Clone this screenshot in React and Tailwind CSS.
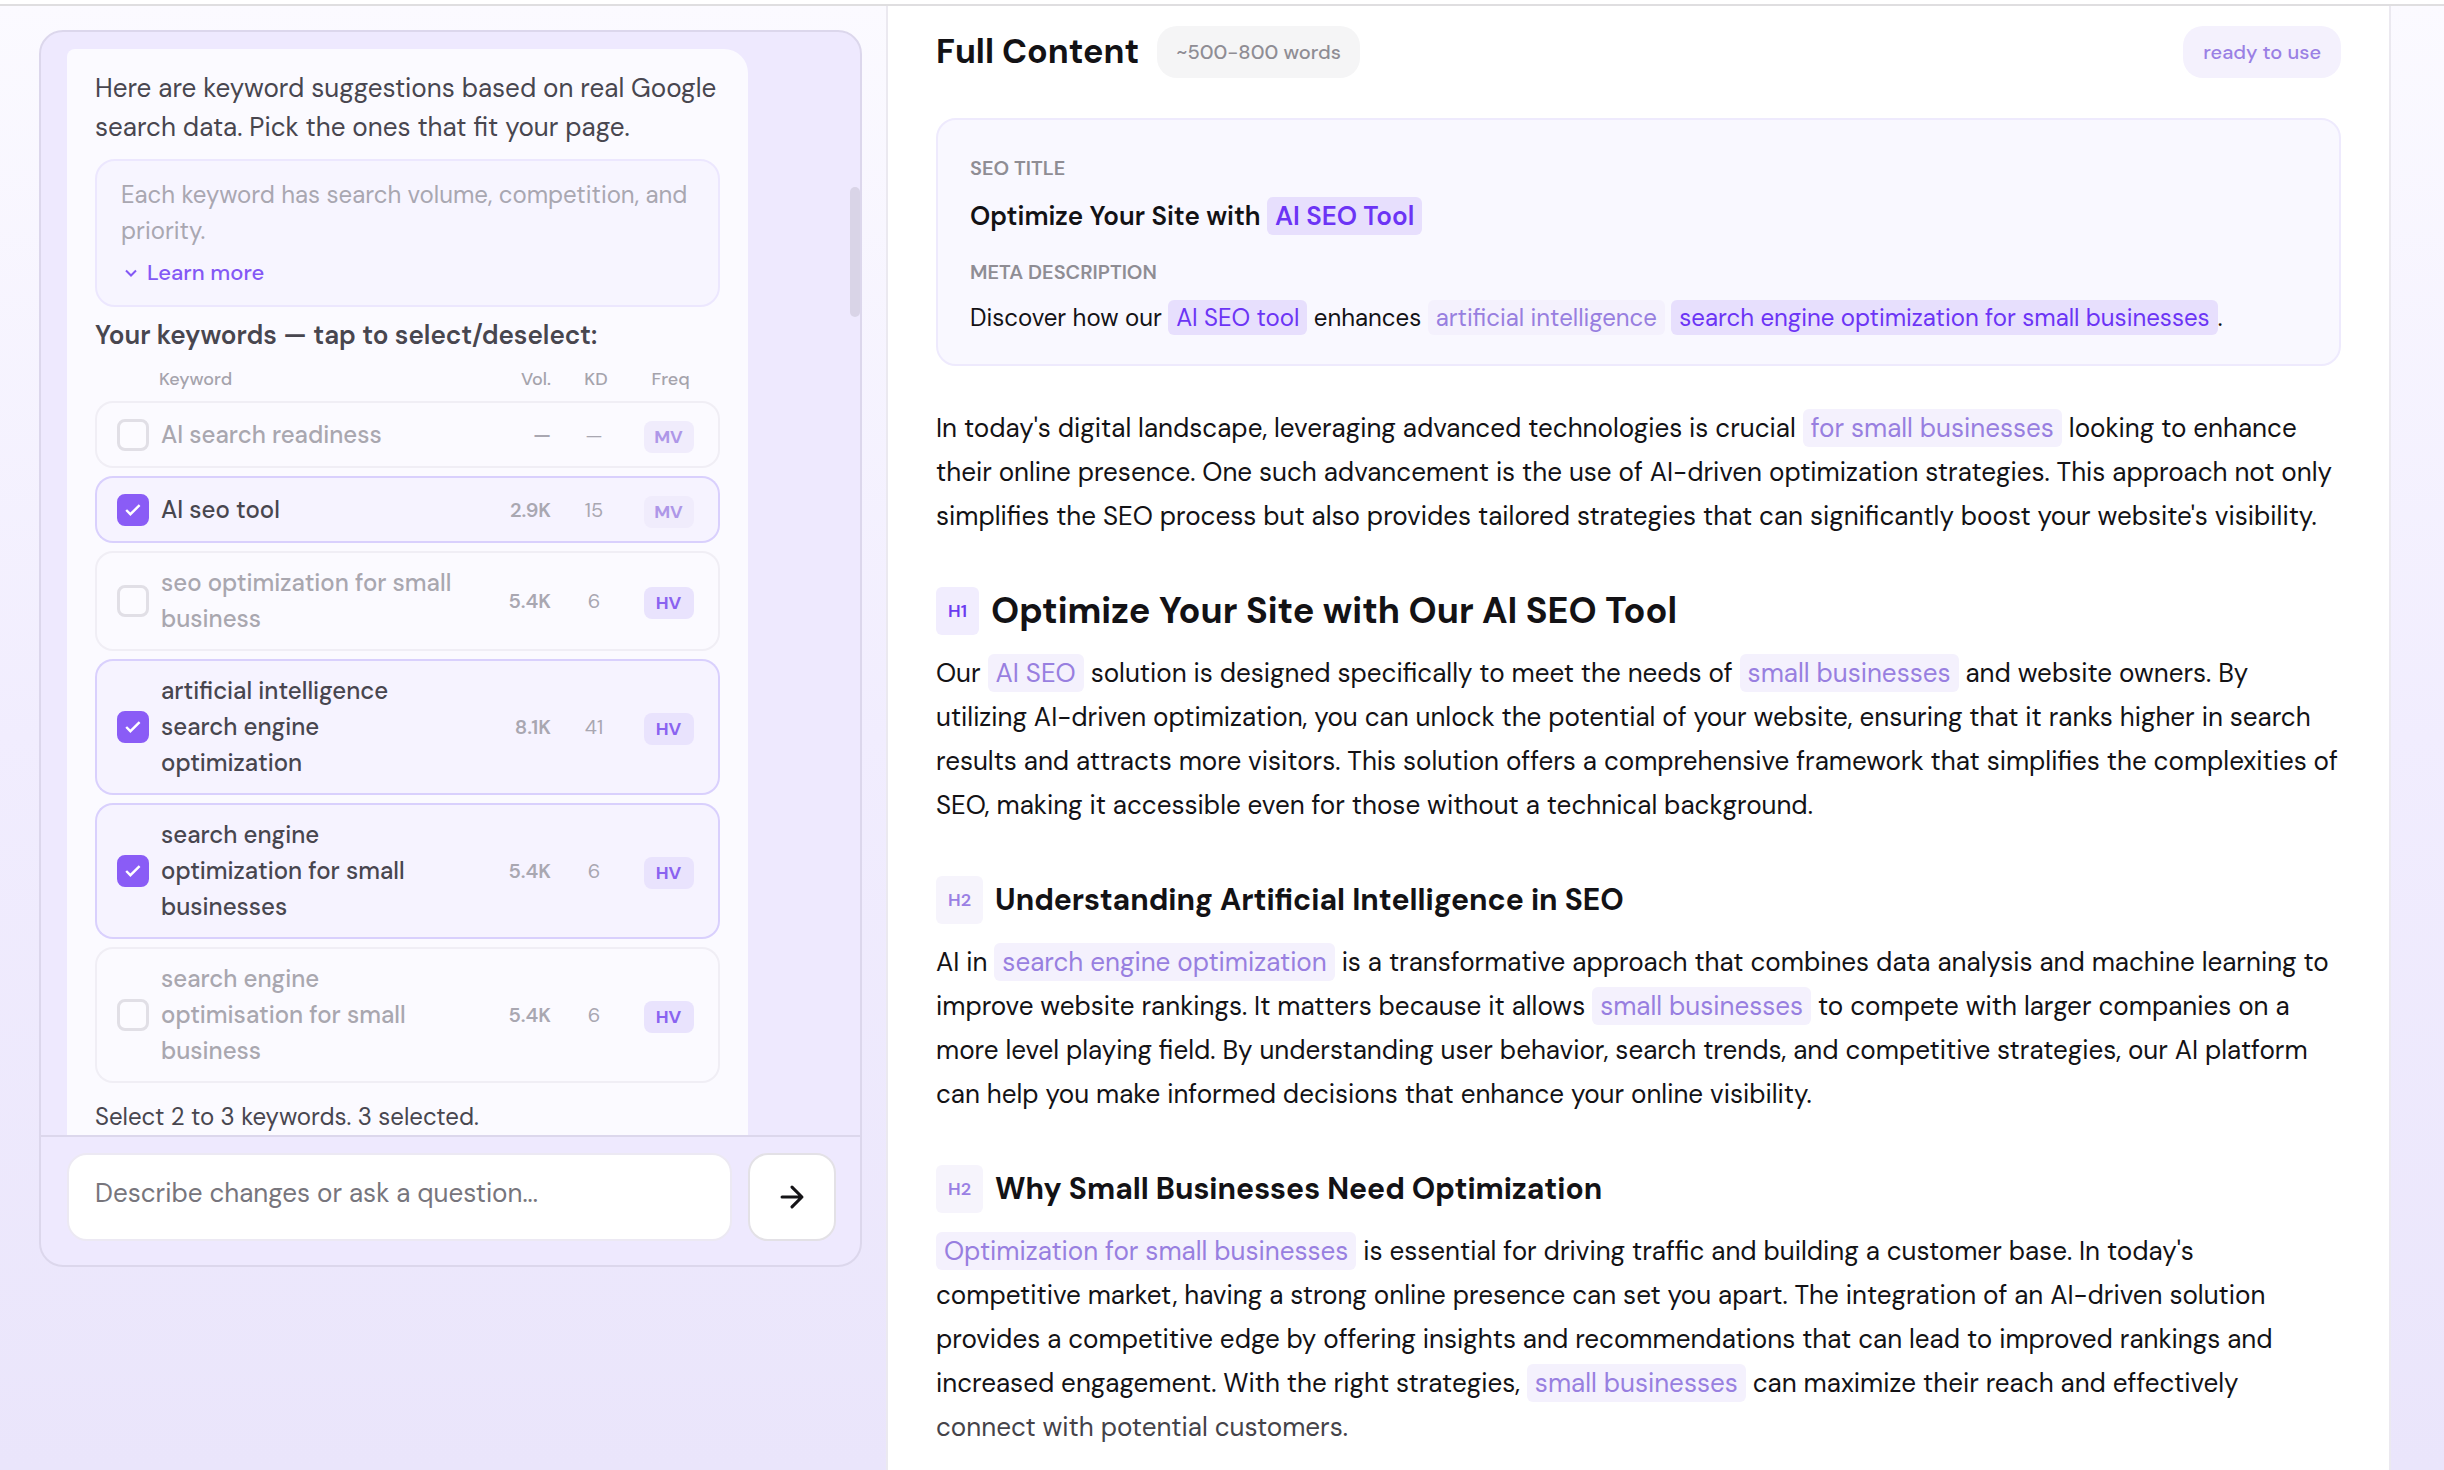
import { useState } from "react";

const KEYWORDS = [
  { id: "readiness", name: "AI search readiness", vol: "—", kd: "—", freq: "MV", on: false },
  { id: "tool", name: "AI seo tool", vol: "2.9K", kd: "15", freq: "MV", on: true },
  { id: "small", name: "seo optimization for small business", vol: "5.4K", kd: "6", freq: "HV", on: false },
  { id: "artificial", name: "artificial intelligence search engine optimization", vol: "8.1K", kd: "41", freq: "HV", on: true },
  { id: "engine", name: "search engine optimization for small businesses", vol: "5.4K", kd: "6", freq: "HV", on: true },
  { id: "optimisation", name: "search engine optimisation for small business", vol: "5.4K", kd: "6", freq: "HV", on: false },
];

function KeywordRow({ item, checked, onToggle }) {
  const cell = checked ? "border-[#d9d0fd] bg-[#f6f3ff]" : "border-[#f0eef5] bg-[#fbfaff]";
  return (
    <tr>
      <td className={`h-[67px] rounded-l-[18px] border-y-2 border-l-2 pl-5 ${cell}`}>
        <span className="grid size-8 place-items-center">
          <input
            id={item.id}
            type="checkbox"
            checked={checked}
            onChange={onToggle}
            className="col-start-1 row-start-1 size-8 appearance-none rounded-lg border-3 border-[#e1dfe6] bg-[#fcfbff] checked:border-[#8a5cf6] checked:bg-[#8a5cf6]"
          />
          {checked && (
            <svg viewBox="0 0 16 12" className="pointer-events-none col-start-1 row-start-1 h-3 w-4" fill="none" stroke="#fff" strokeWidth="2.4">
              <path d="M1.2 6 5.4 10.2 14.6 1.2" />
            </svg>
          )}
        </span>
      </td>
      <td className={`border-y-2 py-3 text-2xl leading-9 font-medium ${cell} ${checked ? "text-[#48464f]" : "text-[#a9a7af]"}`}>
        <label htmlFor={item.id} className="block">{item.name}</label>
      </td>
      <td className={`border-y-2 text-right text-xl font-semibold text-[#a9a7b1] ${cell}`}>{item.vol}</td>
      <td className={`border-y-2 text-center text-xl text-[#a9a7b1] ${cell}`}>{item.kd}</td>
      <td className={`rounded-r-[18px] border-y-2 border-r-2 pt-1 pr-[18px] text-center ${cell}`}>
        <span
          className={`inline-flex h-8 w-[50px] items-center justify-center rounded-lg text-lg font-bold ${
            item.freq === "HV" ? "bg-[#e9e3fd] text-[#8a63f0]" : "bg-[#f0ecfc] text-[#ae97e8]"
          }`}
        >
          {item.freq}
        </span>
      </td>
    </tr>
  );
}

function Strong({ children }) {
  return <mark className="rounded-md bg-[#e7dffd] px-2 py-0.5 text-[#6c34f5]">{children}</mark>;
}

function Soft({ children }) {
  return <mark className="rounded-md bg-[#f4f1fd] px-2 py-0.5 text-[#987fe0]">{children}</mark>;
}

function Section({ level, title, children }) {
  const first = level === 1;
  const Tag = first ? "h1" : "h2";
  return (
    <section className="mt-[49px]">
      <div className="flex items-center gap-3">
        <span
          className={`flex h-12 items-center rounded-md px-3 text-lg font-semibold ${
            first ? "bg-[#f1edfe] text-[#6c3bf0]" : "bg-[#f6f4fc] text-[#9a80e4]"
          }`}
        >
          H{level}
        </span>
        <Tag className={`font-bold ${first ? "text-4xl leading-12" : "text-3xl leading-12"}`}>{title}</Tag>
      </div>
      <p className="mt-4 text-[26px] leading-11">{children}</p>
    </section>
  );
}

export default function App() {
  const [selected, setSelected] = useState(() => KEYWORDS.filter((k) => k.on).map((k) => k.id));
  const toggle = (id) => setSelected((s) => (s.includes(id) ? s.filter((x) => x !== id) : [...s, id]));

  return (
    <div className="flex min-h-screen flex-col bg-white font-['DM_Sans',Inter,sans-serif] text-[#131215]">
      <header className="h-[6px] border-b-2 border-[#dfdee0] bg-white" />
      <main className="grid flex-1 grid-cols-[886fr_1505fr_53fr] bg-linear-to-b from-[#fbfaff] via-[#f1edfe] to-[#eae5fb]">
        <aside className="pt-6 pr-6 pl-[39px]">
          <div className="relative rounded-3xl border-2 border-[#dcd7ec] bg-[#eee9fe]">
            <div className="pt-[17px] pr-28 pl-[26px]">
              <div className="rounded-tl-lg rounded-tr-3xl bg-[#fbfaff] px-7 pt-5 text-[#48464f]">
                <p className="text-[26px] leading-[39px]">
                  Here are keyword suggestions based on real Google search data. Pick the ones that fit your page.
                </p>
                <div className="mt-3 rounded-[20px] border-2 border-[#ece7fe] bg-[#f7f5ff] px-6 py-4">
                  <p className="text-2xl leading-9 text-[#a9a7b1]">
                    Each keyword has search volume, competition, and priority.
                  </p>
                  <button type="button" className="mt-2 flex items-center gap-1.5 text-[22px] leading-8 font-medium text-[#8458f5]">
                    <svg viewBox="0 0 20 20" className="size-5" fill="none" stroke="currentColor" strokeWidth="2">
                      <path d="m5 7.5 5 5 5-5" />
                    </svg>
                    Learn more
                  </button>
                </div>
                <h3 className="mt-2 text-[26px] leading-10 font-semibold">Your keywords — tap to select/deselect:</h3>
                <table className="mt-0.5 w-full table-fixed border-separate border-spacing-x-0 border-spacing-y-2">
                  <colgroup>
                    <col className="w-[66px]" />
                    <col />
                    <col className="w-[90px]" />
                    <col className="w-[86px]" />
                    <col className="w-[83px]" />
                  </colgroup>
                  <thead>
                    <tr className="text-lg leading-7 text-[#a5a3ac]">
                      <th colSpan={2} className="pl-16 text-left font-medium">Keyword</th>
                      <th className="text-right font-medium">Vol.</th>
                      <th className="pl-1 text-center font-medium">KD</th>
                      <th className="pr-4 text-center font-medium">Freq</th>
                    </tr>
                  </thead>
                  <tbody>
                    {KEYWORDS.map((k) => (
                      <KeywordRow key={k.id} item={k} checked={selected.includes(k.id)} onToggle={() => toggle(k.id)} />
                    ))}
                  </tbody>
                </table>
                <p className="pt-2 text-2xl leading-9">Select 2 to 3 keywords. {selected.length} selected.</p>
              </div>
            </div>
            <form className="flex gap-4 border-t-2 border-[#dcd7ec] pt-4 pr-6 pb-6 pl-[26px]" onSubmit={(e) => e.preventDefault()}>
              <input
                type="text"
                aria-label="Describe changes or ask a question"
                placeholder="Describe changes or ask a question..."
                className="h-22 min-w-0 flex-1 rounded-[20px] border-2 border-[#ece9f3] bg-white px-[26px] pb-2 text-[26px] placeholder:text-[#77757c]"
              />
              <button type="submit" aria-label="Send" className="flex size-22 items-center justify-center rounded-[20px] border-2 border-[#e3e1e6] bg-white">
                <svg viewBox="0 0 24 24" className="size-[34px]" fill="none" stroke="#151417" strokeWidth="2.2" strokeLinecap="round" strokeLinejoin="round">
                  <path d="M5 12h14M12 5l7 7-7 7" />
                </svg>
              </button>
            </form>
            <div className="absolute top-[155px] right-0 h-[130px] w-2.5 rounded-full bg-[#d9d4e7]" />
          </div>
        </aside>

        <article className="border-x-2 border-[#ebe9f0] bg-white px-12 pt-5">
          <div className="flex items-center justify-between">
            <div className="flex items-center gap-[18px]">
              <h2 className="text-[34px] leading-12 font-bold">Full Content</h2>
              <span className="flex h-[52px] items-center rounded-[20px] bg-[#f5f5f6] px-[19px] text-xl font-medium text-[#8f8d94]">~500-800 words</span>
            </div>
            <span className="flex h-[52px] items-center rounded-[20px] bg-[#f4f1fd] px-5 text-xl font-medium text-[#9a80e4]">ready to use</span>
          </div>
          <div className="mt-10 rounded-[20px] border-2 border-[#eeeafd] bg-[#f9f8ff] px-8 pt-8 pb-[26px]">
            <h3 className="text-xl leading-8 font-semibold text-[#8f8d94]">SEO TITLE</h3>
            <p className="mt-3 text-[26px] leading-10 font-semibold">
              Optimize Your Site with <Strong>AI SEO Tool</Strong>
            </p>
            <h3 className="mt-5 text-xl leading-8 font-semibold text-[#8f8d94]">META DESCRIPTION</h3>
            <p className="mt-2.5 text-2xl leading-10">
              Discover how our <Strong>AI SEO tool</Strong> enhances <Soft>artificial intelligence</Soft>{" "}
              <Strong>search engine optimization for small businesses</Strong>.
            </p>
          </div>
          <p className="mt-10 text-[26px] leading-11">
            In today's digital landscape, leveraging advanced technologies is crucial <Soft>for small businesses</Soft> looking to
            enhance their online presence. One such advancement is the use of AI-driven optimization strategies. This approach not
            only simplifies the SEO process but also provides tailored strategies that can significantly boost your website's
            visibility.
          </p>
          <Section level={1} title="Optimize Your Site with Our AI SEO Tool">
            Our <Soft>AI SEO</Soft> solution is designed specifically to meet the needs of <Soft>small businesses</Soft> and
            website owners. By utilizing AI-driven optimization, you can unlock the potential of your website, ensuring that it
            ranks higher in search results and attracts more visitors. This solution offers a comprehensive framework that
            simplifies the complexities of SEO, making it accessible even for those without a technical background.
          </Section>
          <Section level={2} title="Understanding Artificial Intelligence in SEO">
            AI in <Soft>search engine optimization</Soft> is a transformative approach that combines data analysis and machine
            learning to improve website rankings. It matters because it allows <Soft>small businesses</Soft> to compete with
            larger companies on a more level playing field. By understanding user behavior, search trends, and competitive
            strategies, our AI platform can help you make informed decisions that enhance your online visibility.
          </Section>
          <Section level={2} title="Why Small Businesses Need Optimization">
            <Soft>Optimization for small businesses</Soft> is essential for driving traffic and building a customer base. In
            today's competitive market, having a strong online presence can set you apart. The integration of an AI-driven
            solution provides a competitive edge by offering insights and recommendations that can lead to improved rankings and
            increased engagement. With the right strategies, <Soft>small businesses</Soft> can maximize their reach and
            effectively <span className="text-[#454349]">connect with potential customers.</span>
          </Section>
        </article>
      </main>
    </div>
  );
}
